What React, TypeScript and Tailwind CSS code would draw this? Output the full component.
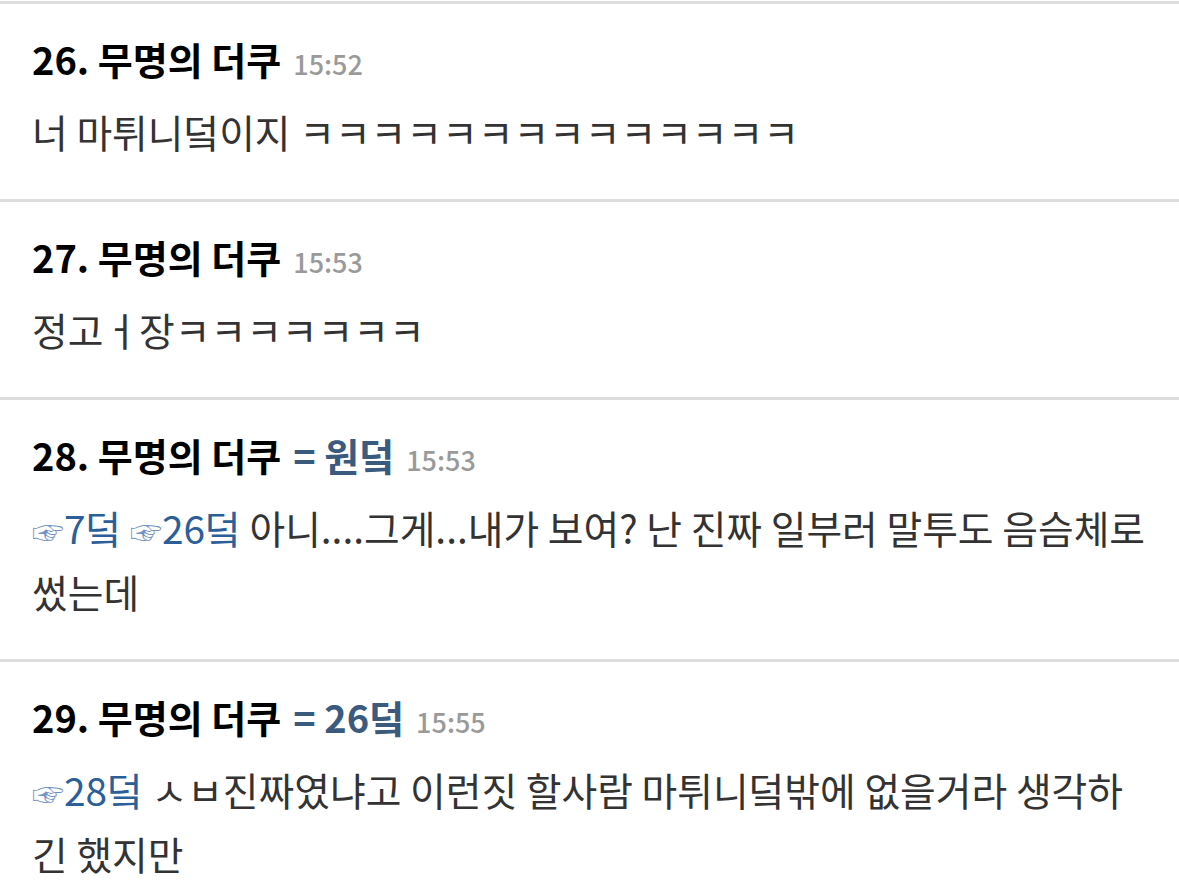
const font = {
  fontFamily: '"Noto Sans CJK KR", "Noto Sans", sans-serif',
};

type Post = {
  no: number;
  target?: string;
  time: string;
  refs?: string[];
  body: string;
};

const posts: Post[] = [
  { no: 26, time: "15:52", body: "너 마튀니덬이지 ㅋㅋㅋㅋㅋㅋㅋㅋㅋㅋㅋㅋㅋㅋ" },
  { no: 27, time: "15:53", body: "정고ￆ장ㅋㅋㅋㅋㅋㅋㅋ" },
  {
    no: 28,
    target: "원덬",
    time: "15:53",
    refs: ["7덬", "26덬"],
    body: "아니....그게...내가 보여? 난 진짜 일부러 말투도 음슴체로 썼는데",
  },
  {
    no: 29,
    target: "26덬",
    time: "15:55",
    refs: ["28덬"],
    body: "ㅅㅂ진짜였냐고 이런짓 할사람 마튀니덬밖에 없을거라 생각하긴 했지만",
  },
];

function Comment({ post }: { post: Post }) {
  return (
    <div className="border-t-[3px] border-[#dddddd] pl-8 pr-[28px] pt-[28px] pb-[36px]">
      <div className="flex items-baseline leading-[54px] whitespace-nowrap">
        <span className="text-[38px] font-bold text-black">
          {post.no}. 무명의 더쿠
        </span>
        {post.target && (
          <span className="ml-[12px] text-[38px] font-bold text-[#3a5a7e]">
            = {post.target}
          </span>
        )}
        <span className="ml-[12px] text-[27px] font-medium text-[#9a9a9a]">
          {post.time}
        </span>
      </div>
      <p className="mt-[8px] text-[38.8px] leading-[64px] text-[#333333]">
        {post.refs?.map((r) => (
          <span key={r} className="text-[#2c5f98]">
            <span className="text-[32px] leading-none text-[#7392c4]">☞</span>
            {r}{" "}
          </span>
        ))}
        {post.body}
      </p>
    </div>
  );
}

export default function App() {
  return (
    <div className="min-h-screen bg-white pt-px" style={font}>
      {posts.map((p) => (
        <Comment key={p.no} post={p} />
      ))}
    </div>
  );
}
